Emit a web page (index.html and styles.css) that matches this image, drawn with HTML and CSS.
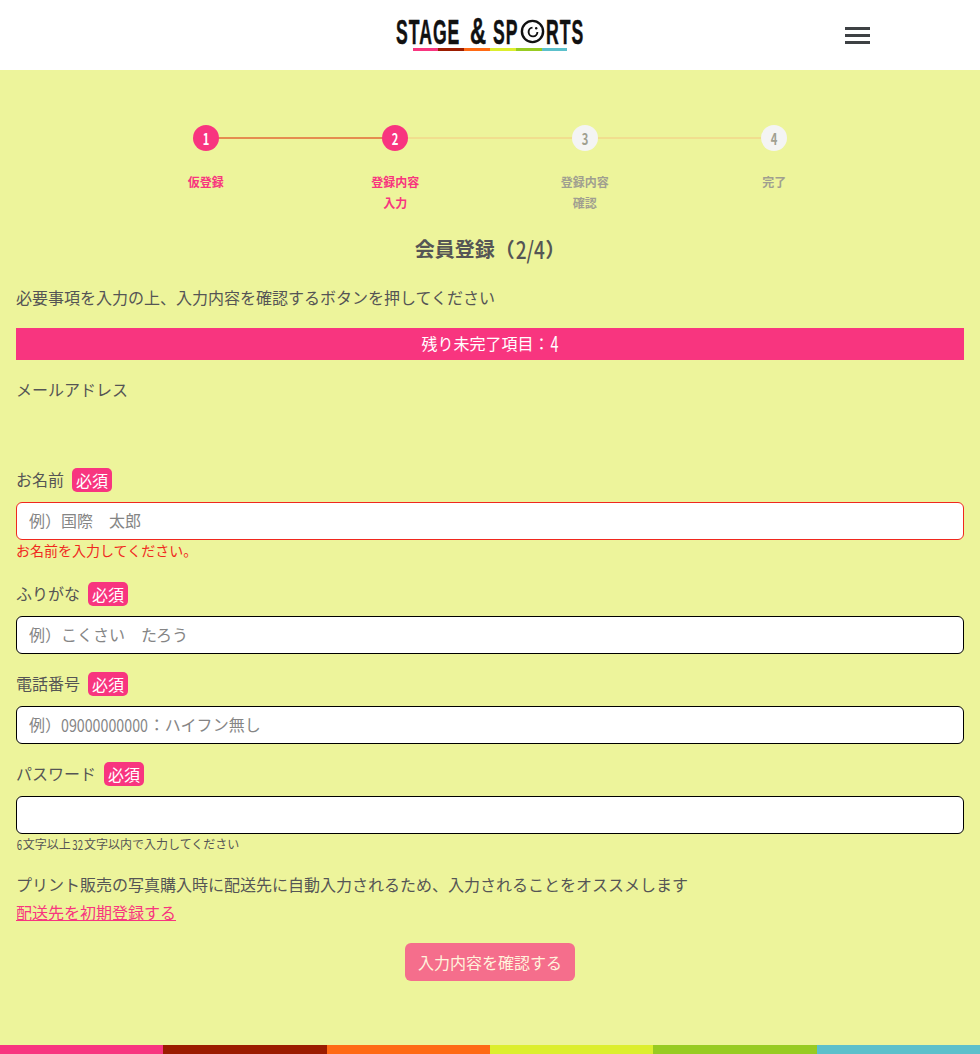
FILE: index.html
```html
<!DOCTYPE html>
<html lang="ja">
<head>
<meta charset="utf-8">
<title>会員登録</title>
<link rel="stylesheet" href="styles.css">
</head>
<body>
<header class="header">
  <div class="logo">
    <svg class="logo-mark" viewBox="0 -6 190 46" aria-label="STAGE &amp; SPORTS">
      <text class="logo-type" transform="translate(1 30) scale(0.49 1)">STAGE</text>
      <text class="logo-type" transform="translate(75 30) scale(0.62 1)">&amp;</text>
      <text class="logo-type" transform="translate(98 30) scale(0.49 1)">SP</text>
      <circle cx="137.5" cy="17.5" r="10.6" fill="none" stroke="#111" stroke-width="2.4"/>
      <path d="M137.5 13.6A4.4 4.4 0 1 0 142.4 18" fill="none" stroke="#111" stroke-width="1.9"/>
      <circle cx="141.2" cy="14.2" r="1.2" fill="#111"/>
      <text class="logo-type" transform="translate(151 30) scale(0.49 1)">RTS</text>
    </svg>
    <div class="logo-bar"><i class="c1"></i><i class="c2"></i><i class="c3"></i><i class="c4"></i><i class="c5"></i><i class="c6"></i></div>
  </div>
  <button class="menu" aria-label="menu"><span></span><span></span><span></span></button>
</header>
<main class="main">
  <ol class="steps">
    <li class="step on line-on"><span class="dot"><span class="num">1</span></span><span class="step-label">仮登録</span></li>
    <li class="step on"><span class="dot"><span class="num">2</span></span><span class="step-label">登録内容<br>入力</span></li>
    <li class="step"><span class="dot"><span class="num">3</span></span><span class="step-label">登録内容<br>確認</span></li>
    <li class="step last"><span class="dot"><span class="num">4</span></span><span class="step-label">完了</span></li>
  </ol>
  <h1 class="title">会員登録（<span class="num medium">2/4</span>）</h1>
  <p class="lead">必要事項を入力の上、入力内容を確認するボタンを押してください</p>
  <div class="remain">残り未完了項目：<span class="num tall">4</span></div>
  <div class="field-email">メールアドレス</div>
  <form class="form">
    <div class="field">
      <div class="label">お名前<span class="req">必須</span></div>
      <input class="input error" type="text" placeholder="例）国際　太郎">
      <div class="err-msg">お名前を入力してください。</div>
    </div>
    <div class="field">
      <div class="label">ふりがな<span class="req">必須</span></div>
      <input class="input" type="text" placeholder="例）こくさい　たろう">
    </div>
    <div class="field">
      <div class="label">電話番号<span class="req">必須</span></div>
      <div class="input-wrap">
        <input class="input" type="text" aria-label="電話番号">
        <span class="ph">例）<span class="ph-num">09000000000</span>：ハイフン無し</span>
      </div>
    </div>
    <div class="field">
      <div class="label">パスワード<span class="req">必須</span></div>
      <input class="input" type="password">
      <div class="hint"><span class="num">6</span>文字以上<span class="num">32</span>文字以内で入力してください</div>
    </div>
    <p class="note">プリント販売の写真購入時に配送先に自動入力されるため、入力されることをオススメします</p>
    <a class="link" href="#">配送先を初期登録する</a>
    <div class="actions"><button class="submit" type="button">入力内容を確認する</button></div>
  </form>
</main>
<footer class="strip"><i class="c1"></i><i class="c2"></i><i class="c3"></i><i class="c4"></i><i class="c5"></i><i class="c6"></i></footer>
</body>
</html>
```
FILE: styles.css
```css
* { box-sizing: border-box; }
html, body { margin: 0; padding: 0; }
body {
  width: 980px;
  height: 1054px;
  display: flex;
  flex-direction: column;
  overflow: hidden;
  background: #edf49b;
  color: #555;
  font-family: "Noto Sans CJK JP", sans-serif;
  font-size: 16px;
}
.c1 { background: #f8357f; }
.c2 { background: #9b1c00; }
.c3 { background: #ff6a14; }
.c4 { background: #dcee2e; }
.c5 { background: #97cb22; }
.c6 { background: #5cc0cb; }

.num { display: inline-block; transform: scale(0.8, 1.1); }
.num.medium { font-weight: 500; transform: scale(0.95, 1.2); }
.num.tall { transform: scale(0.9, 1.3); font-weight: 400; }

.header {
  height: 70px;
  background: #fff;
  display: flex;
  justify-content: center;
  position: relative;
}
.logo { width: 190px; padding-top: 8px; display: flex; flex-direction: column; align-items: center; }
.logo-mark { display: block; width: 190px; height: 46px; margin-bottom: -6px; flex: none; }
.logo-type {
  font-family: "Liberation Sans", sans-serif;
  font-size: 36px;
  font-weight: 700;
  letter-spacing: 2px;
  fill: #111;
  stroke: #111;
  stroke-width: 0.5px;
}
.logo-bar { display: flex; width: 155px; height: 3px; }
.logo-bar i { flex: 1; }
.menu {
  position: absolute;
  left: 845px;
  top: 27px;
  width: 25px;
  height: 17px;
  padding: 0;
  border: 0;
  background: none;
  display: flex;
  flex-direction: column;
  justify-content: space-between;
}
.menu span { display: block; height: 3px; background: #3e4144; }

.main { flex: 1; padding: 55px 16px 0; }
.steps {
  list-style: none;
  margin: 0 0 0 95px;
  padding: 0;
  width: 758px;
  display: grid;
  grid-template-columns: repeat(4, 1fr);
}
.step { position: relative; display: flex; flex-direction: column; align-items: center; color: #a09f90; }
.step::after {
  content: "";
  position: absolute;
  left: 50%;
  top: 12px;
  width: 100%;
  height: 2px;
  background: #f1de8e;
}
.step.line-on::after { background: #e58c4f; }
.step.last::after { display: none; }
.dot {
  position: relative;
  z-index: 1;
  width: 26px;
  height: 26px;
  border-radius: 50%;
  background: #f4f4f4;
  display: flex;
  align-items: center;
  justify-content: center;
  font-size: 14px;
  font-weight: 700;
}
.on .dot { background: #f8357f; color: #fff; }
.on { color: #f8357f; }
.step-label { margin-top: 20px; font-size: 12px; font-weight: 700; line-height: 21px; text-align: center; }
.title { margin: 20px 0 0; font-size: 20px; font-weight: 700; line-height: 32px; text-align: center; }
.lead { margin: 20px 0 0; line-height: 24px; }
.remain {
  margin-top: 19px;
  height: 32px;
  background: #f8357f;
  color: #fff;
  font-size: 16px;
  font-weight: 400;
  line-height: 30px;
  text-align: center;
}
.field-email { margin-top: 17px; height: 24px; line-height: 24px; }
.form { margin-top: 67px; }
.field { margin-bottom: 18px; }
.label { height: 24px; line-height: 22px; display: flex; align-items: flex-start; margin-bottom: 10px; }
.req {
  margin-left: 8px;
  width: 40px;
  height: 24px;
  border-radius: 5px;
  background: #f8357f;
  color: #fff;
  text-align: center;
  line-height: 24px;
}
.input {
  display: block;
  width: 100%;
  height: 38px;
  padding: 0 12px 2px;
  border: 1px solid #000;
  border-radius: 6px;
  background: #fff;
  font: inherit;
  color: #555;
  outline: 0;
}
.input::placeholder { color: #858585; opacity: 1; }
.input.error { border-color: #f0281e; }
.input-wrap { position: relative; }
.ph {
  position: absolute;
  left: 13px;
  top: 0;
  line-height: 36px;
  color: #858585;
  pointer-events: none;
  white-space: nowrap;
}
.ph-num {
  display: inline-block;
  margin-right: -10px;
  transform: scale(0.89, 1.08);
  transform-origin: left center;
}
.err-msg { margin-top: -1px; padding-bottom: 3px; color: #f0281e; font-size: 14px; line-height: 22px; }
.hint { font-size: 12px; line-height: 20px; margin-bottom: -22px; }
.note { margin: 0; padding-top: 22px; line-height: 24px; }
.link { display: block; margin-top: 4px; line-height: 24px; color: #f8357f; width: max-content; }
.actions { margin-top: 19px; display: flex; justify-content: center; }
.submit {
  width: 170px;
  height: 38px;
  border: 0;
  border-radius: 6px;
  background: #f56e8c;
  color: #fff3dc;
  font: inherit;
  line-height: 24px;
}
.strip { height: 9px; display: flex; flex: none; }
.strip i { flex: 1; }
```
